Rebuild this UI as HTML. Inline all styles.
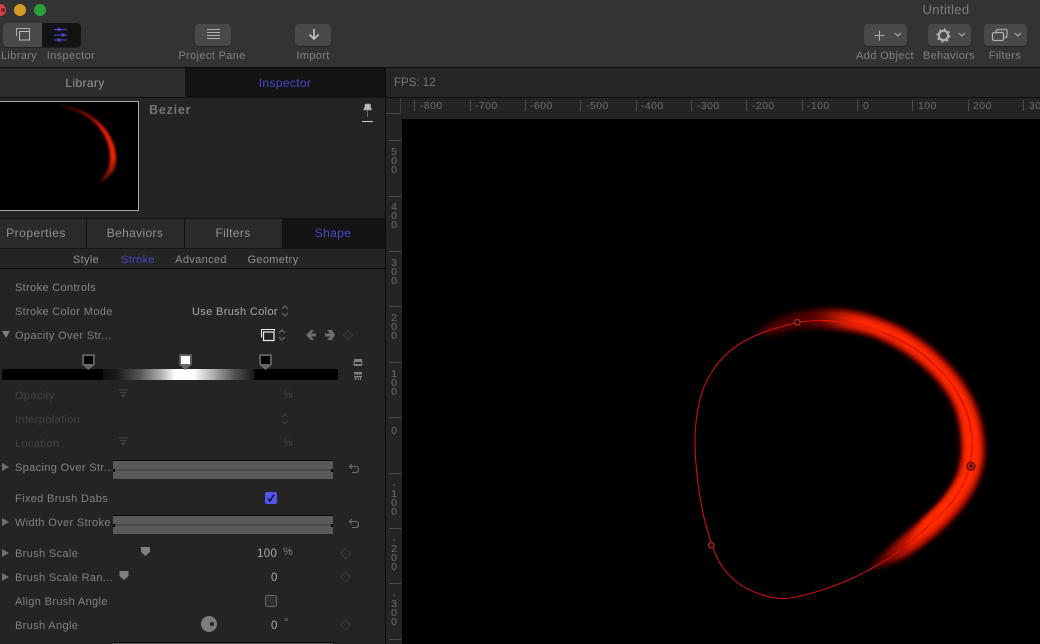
<!DOCTYPE html>
<html><head><meta charset="utf-8">
<style>
html,body{margin:0;padding:0;background:#000;}
#r{position:relative;width:1040px;height:644px;overflow:hidden;background:#242424;font-family:"Liberation Sans",sans-serif;font-size:11px;color:#8a8a8a;}
.a{position:absolute;}
.t{position:absolute;white-space:nowrap;line-height:14px;letter-spacing:.35px;}
.c{transform:translateX(-50%);}
.b{position:absolute;background:#494949;border-radius:4px;box-shadow:0 1px 0 #222;top:24px;height:22px;}
.l{color:#828282;}
.d{color:#424242;}
.v{color:#aaa;}
.rx{position:absolute;top:100px;font-size:10.5px;color:#6c6c6c;letter-spacing:.4px;line-height:12px;white-space:nowrap;}
.tk{position:absolute;top:100px;width:1px;height:11px;background:#4c4c4c;}
.ry{position:absolute;left:386px;width:16px;text-align:center;font-size:10.5px;line-height:9px;color:#6c6c6c;}
.ty{position:absolute;left:389px;width:12px;height:1px;background:#4c4c4c;}
svg{position:absolute;overflow:visible;}
</style></head><body><div id="r">

<!-- toolbar -->
<div class="a" style="left:0;top:0;width:1040px;height:67px;background:#333"></div>
<div class="a" style="left:0;top:67px;width:1040px;height:1px;background:#0c0c0c"></div>
<div class="a" style="left:-6px;top:4px;width:12px;height:12px;border-radius:50%;background:#d8404a"></div>
<div class="a" style="left:1px;top:8px;width:4px;height:4px;border-radius:50%;background:#7a2228"></div>
<div class="a" style="left:14px;top:4px;width:12px;height:12px;border-radius:50%;background:#d69a28"></div>
<div class="a" style="left:34px;top:4px;width:12px;height:12px;border-radius:50%;background:#2aa03a"></div>
<div class="t c" style="left:946px;top:3px;font-size:13px;color:#7e7e7e">Untitled</div>

<div class="b" style="left:3px;width:39px;top:23px;height:24px;border-radius:4px 0 0 4px"></div>
<div class="b" style="left:42px;width:39px;top:23px;height:24px;background:#131313;border-radius:0 4px 4px 0"></div>
<svg style="left:0;top:0" width="100" height="50" fill="none" stroke="#aaa" stroke-width="1">
<path d="M16.500 36V28.500H29.500V37.500"/><rect x="19.500" y="31.500" width="10" height="8.500" stroke="#bbb"/>
<path d="M54 29.500H67M54 35H67M54 40H67" stroke="#4c48d8" stroke-width="1"/>
<rect x="57.500" y="28" width="3" height="3" fill="#4c48d8" stroke="none"/><rect x="61.500" y="33.500" width="3" height="3" fill="#4c48d8" stroke="none"/><rect x="57.500" y="38.500" width="3" height="3" fill="#4c48d8" stroke="none"/>
</svg>
<div class="b" style="left:195px;width:36px"></div>
<svg style="left:0;top:0" width="240" height="50" fill="none" stroke="#b0b0b0"><path d="M207 29.500H220M207 32.500H220M207 35.500H220M207 38.500H220"/></svg>
<div class="b" style="left:295px;width:36px"></div>
<svg style="left:0;top:0" width="340" height="50" fill="none" stroke="#c4c4c4" stroke-width="1.600"><path d="M314 29V39M309.500 34.500L314 39L318.500 34.500"/></svg>
<div class="b" style="left:864px;width:43px"></div>
<div class="b" style="left:928px;width:43px"></div>
<div class="b" style="left:984px;width:43px"></div>
<svg style="left:0;top:0" width="1040" height="50" fill="none" stroke="#b0b0b0">
<path d="M879.500 30.500V40.500M874.500 35.500H884.500" stroke-width="1.100"/>
<path d="M895 33L898 36L901 33M959 33L962 36L965 33M1015 33L1018 36L1021 33" stroke-width="1.100"/>
<circle cx="943.500" cy="35.500" r="4.700" stroke-width="2.200"/>
<circle cx="943.500" cy="35.500" r="6.300" stroke-dasharray="2 2.950" stroke-width="1.600"/>
<path d="M996 33.500V31.500Q996 29.500 998 29.500H1006Q1007 29.500 1007 31V36Q1007 37.500 1005.500 37.500H1004" stroke="#999" stroke-width="1.500"/>
<rect x="992.500" y="32.500" width="11" height="8" rx="1.500" stroke-width="1.200"/>
</svg>
<div class="t c" style="left:19px;top:49px;color:#808080">Library</div>
<div class="t c" style="left:71px;top:49px;color:#808080">Inspector</div>
<div class="t c" style="left:212px;top:49px;color:#808080">Project Pane</div>
<div class="t c" style="left:313px;top:49px;color:#808080">Import</div>
<div class="t c" style="left:885px;top:49px;color:#808080">Add Object</div>
<div class="t c" style="left:949px;top:49px;color:#808080">Behaviors</div>
<div class="t c" style="left:1005px;top:49px;color:#808080">Filters</div>

<!-- main tabs -->
<div class="a" style="left:0;top:68px;width:185px;height:29px;background:#2d2d2d"></div>
<div class="a" style="left:185px;top:68px;width:200px;height:30px;background:#141414"></div>
<div class="a" style="left:0;top:97px;width:185px;height:1px;background:#0d0d0d"></div>
<div class="t c" style="left:85px;top:76px;font-size:12px;color:#989898">Library</div>
<div class="t c" style="left:285px;top:76px;font-size:12px;color:#4a47cc">Inspector</div>
<div class="a" style="left:385px;top:68px;width:1px;height:576px;background:#0c0c0c"></div>

<!-- thumbnail -->
<div class="a" style="left:-2px;top:101px;width:139px;height:108px;background:#000;border:1px solid #a8a8a8"></div>
<svg style="left:0;top:0" width="140" height="212">
<defs><filter id="f0" x="-30%" y="-30%" width="160%" height="160%"><feGaussianBlur stdDeviation="1"/></filter>
<linearGradient id="tg" gradientUnits="userSpaceOnUse" x1="0" y1="105" x2="0" y2="185"><stop offset="0" stop-color="#300"/><stop offset=".3" stop-color="#d81c00"/><stop offset=".65" stop-color="#f02400"/><stop offset="1" stop-color="#2a0400"/></linearGradient></defs>
<path d="M57 106C75 105 92 113 104 127C115 140 119 158 114 170C110 177 104 181 97 184C106 175 110 168 110 156C110 143 102 128 90 119C80 112 68 108 57 106Z" fill="url(#tg)" filter="url(#f0)"/>
</svg>
<div class="t" style="left:149px;top:103px;font-size:12.500px;font-weight:bold;color:#747474;letter-spacing:.8px">Bezier</div>
<svg style="left:0;top:0" width="385" height="125">
<path d="M365 104H370.500V106.500L371.500 110H363.500L365 106.500ZM367.500 110V117" fill="#bdbdbd" stroke="#999" stroke-width=".6"/><path d="M362 121.500H373" stroke="#ccc" stroke-width="1"/>
</svg>

<!-- section tabs -->
<div class="a" style="left:0;top:218px;width:385px;height:1px;background:#111"></div>
<div class="a" style="left:0;top:219px;width:282px;height:29px;background:#2a2a2a"></div>
<div class="a" style="left:282px;top:219px;width:103px;height:29px;background:#141414"></div>
<div class="a" style="left:86px;top:219px;width:1px;height:29px;background:#111"></div>
<div class="a" style="left:184px;top:219px;width:1px;height:29px;background:#111"></div>
<div class="a" style="left:0;top:248px;width:385px;height:1px;background:#161616"></div>
<div class="t c" style="left:36px;top:226px;font-size:12px;color:#929292;letter-spacing:.5px">Properties</div>
<div class="t c" style="left:135px;top:226px;font-size:12px;color:#929292">Behaviors</div>
<div class="t c" style="left:233px;top:226px;font-size:12px;color:#929292">Filters</div>
<div class="t c" style="left:333px;top:226px;font-size:12px;color:#4a47cc">Shape</div>
<div class="t c" style="left:86px;top:253px;color:#909090">Style</div>
<div class="t c" style="left:138px;top:253px;color:#4a47c4">Stroke</div>
<div class="t c" style="left:201px;top:253px;color:#909090">Advanced</div>
<div class="t c" style="left:273px;top:253px;color:#909090">Geometry</div>
<div class="a" style="left:0;top:268px;width:385px;height:1px;background:#0f0f0f"></div>

<!-- rows -->
<div class="t" style="left:15px;top:281px;color:#888">Stroke Controls</div>
<div class="t l" style="left:15px;top:305px">Stroke Color Mode</div>
<div class="t v" style="left:192px;top:305px">Use Brush Color</div>
<div class="t l" style="left:15px;top:329px">Opacity Over Str...</div>
<div class="t d" style="left:15px;top:389px">Opacity</div>
<div class="t d" style="left:15px;top:413px">Interpolation</div>
<div class="t d" style="left:15px;top:437px">Location</div>
<div class="t d" style="left:283px;top:388px">%</div>
<div class="t d" style="left:283px;top:436px">%</div>
<div class="t l" style="left:15px;top:461px">Spacing Over Str...</div>
<div class="t l" style="left:15px;top:492px">Fixed Brush Dabs</div>
<div class="t l" style="left:15px;top:516px">Width Over Stroke</div>
<div class="t l" style="left:15px;top:547px">Brush Scale</div>
<div class="t l" style="left:15px;top:571px">Brush Scale Ran...</div>
<div class="t l" style="left:15px;top:595px">Align Brush Angle</div>
<div class="t l" style="left:15px;top:619px">Brush Angle</div>
<div class="t v" style="left:257px;top:547px;font-size:11.500px">100</div>
<div class="t l" style="left:283px;top:545px">%</div>
<div class="t v" style="left:271px;top:571px;font-size:11.500px">0</div>
<div class="t v" style="left:271px;top:619px;font-size:11.500px">0</div>
<div class="t l" style="left:284px;top:616px">°</div>

<!-- gradient bar -->
<div class="a" style="left:2px;top:369px;width:336px;height:11px;border-radius:2px;background:linear-gradient(90deg,#000 0,#000 30%,#111 30%,#191919 34%,#555 41%,#aaa 47%,#fff 51.500%,#fff 57%,#bbb 62%,#555 69%,#1a1a1a 75%,#000 75.300%,#000 100%)"></div>
<svg style="left:0;top:0" width="385" height="644" fill="none">
<g stroke="#666" stroke-width="1.500" fill="#666">
<path d="M83 355H94V364.500L88.500 369L83 364.500Z"/><path d="M180 355H191V364.500L185.500 369L180 364.500Z"/><path d="M260 355H271V364.500L265.500 369L260 364.500Z"/>
</g>
<rect x="84" y="356" width="9" height="8" fill="#000"/><rect x="181" y="356" width="9" height="8" fill="#fff"/><rect x="261" y="356" width="9" height="8" fill="#000"/>
<!-- triangles -->
<path d="M2 331H10L6 338Z" fill="#808080"/>
<path d="M2 463V471L9 467Z" fill="#707070"/><path d="M2 518V526L9 522Z" fill="#707070"/><path d="M2 549V557L9 553Z" fill="#707070"/><path d="M2 573V581L9 577Z" fill="#707070"/>
<!-- steppers -->
<g stroke="#6e6e6e" stroke-width="1.100">
<path d="M282 309L285 306L288 309M282 313L285 316L288 313"/>
<path d="M279 333L282 330L285 333M279 337L282 340L285 337"/>
</g>
<path d="M282 417L285 414L288 417M282 421L285 424L288 421" stroke="#3e3e3e"/>
<!-- layers icon -->
<path d="M261.500 337.500V329.500H274.500V331" stroke="#eee" stroke-width="1"/><rect x="263.500" y="332" width="10.500" height="8.500" stroke="#eee" stroke-width="1.200"/>
<!-- nav arrows -->
<path d="M311 330L306 335L311 340H314L311 336.500H316V333.500H311L314 330Z" fill="#6e6e6e"/>
<path d="M327 330L332 330L335 335L332 340H327L330 336.500H325V333.500H330Z" fill="#6e6e6e"/>
<path d="M348 330.500L352.500 335L348 339.500L343.500 335Z" stroke="#3a3a3a"/>
<!-- stack icons -->
<path d="M354 359.500H362M354 365.500H362" stroke="#808080" stroke-width="1"/><rect x="354" y="361.500" width="8" height="3" stroke="#808080" stroke-width="1"/><rect x="354" y="360" width="8" height="2" fill="#808080"/>
<rect x="354" y="372" width="8" height="2.500" fill="#808080"/><path d="M354 376.500H362M355.500 377V380M358 377V380M360.500 377V380" stroke="#808080" stroke-width="1.200"/>
<!-- dim slider glyphs -->
<path d="M119 390H128M120 392.500H127M122 395H125L123.500 397Z" stroke="#444"/>
<path d="M119 438H128M120 440.500H127M122 443H125L123.500 445Z" stroke="#444"/>
<!-- curve bars -->
<rect x="113" y="461" width="220" height="18" fill="#5a5a5a"/><path d="M113 460.500H333" stroke="#0a0a0a"/><path d="M113 470H333" stroke="#464646" stroke-width="1.600"/>
<rect x="113" y="469" width="2" height="3" fill="#000"/><rect x="331" y="469" width="2" height="3" fill="#000"/>
<rect x="113" y="516" width="220" height="18" fill="#5a5a5a"/><path d="M113 515.500H333" stroke="#0a0a0a"/><path d="M113 525H333" stroke="#464646" stroke-width="1.600"/>
<rect x="113" y="524" width="2" height="3" fill="#000"/><rect x="331" y="524" width="2" height="3" fill="#000"/>
<path d="M113 642.500H333" stroke="#0a0a0a"/><rect x="113" y="643" width="220" height="1" fill="#5a5a5a"/>
<!-- reset -->
<path d="M352 464L349.500 466.500L352 469M350 466.500H355.500Q358.500 466.500 358.500 469.500Q358.500 472.500 355.500 472.500H352" stroke="#6e6e6e" stroke-width="1.100"/>
<path d="M352 519L349.500 521.500L352 524M350 521.500H355.500Q358.500 521.500 358.500 524.500Q358.500 527.500 355.500 527.500H352" stroke="#6e6e6e" stroke-width="1.100"/>
<!-- diamonds -->
<path d="M345.500 548.500L350.500 553.500L345.500 558.500L340.500 553.500Z" stroke="#3a3a3a"/>
<path d="M345.500 572L350.500 577L345.500 582L340.500 577Z" stroke="#3a3a3a"/>
<path d="M345.500 620L350.500 625L345.500 630L340.500 625Z" stroke="#3a3a3a"/>
<!-- slider thumbs -->
<path d="M141 547H150V552L145.500 556L141 552Z" fill="#808080"/>
<path d="M119.500 571H128.500V576L124 580L119.500 576Z" fill="#808080"/>
<!-- check -->
<rect x="265" y="492" width="12" height="12" rx="2" fill="#5553ee"/>
<path d="M268 498.500L270 501L274 494.500" stroke="#0c0c20" stroke-width="1.400"/>
<rect x="265.500" y="595.500" width="11" height="11" rx="2" fill="#2f2f2f" stroke="#6a6a6a"/>
<!-- dial -->
<circle cx="209" cy="624" r="8" fill="#7c7c7c"/><circle cx="212" cy="624" r="2" fill="#222"/>
</svg>

<!-- viewer header -->
<div class="a" style="left:386px;top:68px;width:654px;height:29px;background:#262626"></div>
<div class="a" style="left:386px;top:97px;width:654px;height:1px;background:#0c0c0c"></div>
<div class="t" style="left:394px;top:76px;font-size:11.500px;color:#777;letter-spacing:0">FPS: 12</div>
<div class="a" style="left:386px;top:98px;width:654px;height:546px;background:#242424"></div>
<div class="a" style="left:402px;top:119px;width:638px;height:525px;background:#000"></div>
<div class="a" style="left:386px;top:113px;width:15px;height:1px;background:#4c4c4c"></div>
<div class="a" style="left:400px;top:98px;width:1px;height:16px;background:#3c3c3c"></div>

<div class="tk" style="left:414px"></div><div class="rx" style="left:420px">-800</div>
<div class="tk" style="left:470px"></div><div class="rx" style="left:475px">-700</div>
<div class="tk" style="left:525px"></div><div class="rx" style="left:530px">-600</div>
<div class="tk" style="left:580px"></div><div class="rx" style="left:586px">-500</div>
<div class="tk" style="left:636px"></div><div class="rx" style="left:641px">-400</div>
<div class="tk" style="left:691px"></div><div class="rx" style="left:697px">-300</div>
<div class="tk" style="left:746px"></div><div class="rx" style="left:752px">-200</div>
<div class="tk" style="left:802px"></div><div class="rx" style="left:807px">-100</div>
<div class="tk" style="left:857px"></div><div class="rx" style="left:863px">0</div>
<div class="tk" style="left:912px"></div><div class="rx" style="left:918px">100</div>
<div class="tk" style="left:968px"></div><div class="rx" style="left:973px">200</div>
<div class="tk" style="left:1023px"></div><div class="rx" style="left:1029px">300</div>

<div class="ty" style="top:140px"></div><div class="ry" style="top:148px">5<br>0<br>0</div>
<div class="ty" style="top:196px"></div><div class="ry" style="top:203px">4<br>0<br>0</div>
<div class="ty" style="top:251px"></div><div class="ry" style="top:259px">3<br>0<br>0</div>
<div class="ty" style="top:306px"></div><div class="ry" style="top:314px">2<br>0<br>0</div>
<div class="ty" style="top:362px"></div><div class="ry" style="top:370px">1<br>0<br>0</div>
<div class="ty" style="top:417px"></div><div class="ry" style="top:427px">0</div>
<div class="ty" style="top:473px"></div><div class="ry" style="top:481px">-<br>1<br>0<br>0</div>
<div class="ty" style="top:528px"></div><div class="ry" style="top:536px">-<br>2<br>0<br>0</div>
<div class="ty" style="top:583px"></div><div class="ry" style="top:591px">-<br>3<br>0<br>0</div>
<div class="ty" style="top:639px"></div>

<!-- canvas art -->
<svg style="left:0;top:0" width="1040" height="644" fill="none">
<defs>
<filter id="g1" x="-20%" y="-20%" width="140%" height="140%"><feGaussianBlur stdDeviation="3"/></filter>
<filter id="g2" x="-20%" y="-20%" width="140%" height="140%"><feGaussianBlur stdDeviation="2.200"/></filter>
<filter id="g3" x="-30%" y="-30%" width="160%" height="160%"><feGaussianBlur stdDeviation="14"/></filter>
<mask id="m1" maskUnits="userSpaceOnUse" x="700" y="260" width="340" height="360"><path d="M815 270H1030V610H900L880 440Z" fill="#fff" filter="url(#g3)"/></mask>
<path id="cres" d="M757 332Q780 315 800 311.500Q820 308 843.500 310.500Q867 313 890 323Q913 333 933 350Q953 367 965 386Q977 405 981 423.500Q985 442 983.500 458.500Q982 475 972.500 491.500Q963 508 948 523Q933 538 913 551.500Q893 565 867 570Q877 558 895 543Q913 528 928 515Q943 502 951.500 487Q960 472 961.500 457Q963 442 960 425Q957 408 947 393Q937 378 922 365Q907 352 887 342Q867 332 845 330Q823 328 810 328Q797 328 782 332.500Q767 337 757 332Z"/>
</defs>
<use href="#cres" fill="#4c0600" filter="url(#g1)"/>
<g mask="url(#m1)">
<use href="#cres" fill="#d01600" filter="url(#g1)"/>
<path d="M800 320Q820 313 843 315Q867 318 889 327Q911 337 930 353Q949 370 961 388Q973 407 977 425Q981 442 979.500 457Q978 473 968 489Q959 505 944 520Q929 535 905 549Q916 526 931 512Q946 498 954 485Q963 472 964 457Q965 442 962 424Q960 406 950 391Q940 376 924 362Q909 349 888 338Q867 328 845 326Q823 324 800 320Z" fill="#ff2c00" filter="url(#g2)"/>
</g>
<path d="M797.300 322.300Q823 319 845 322Q867 325 890 335Q913 345 930 360Q947 375 957 391.500Q967 408 970 423Q973 438 972 452Q971 466 964 482Q957 498 942 513Q927 528 910 542.500Q893 557 870 569.500Q847 582 822 590Q797 598 785 598.500Q773 599 758 593.500Q743 588 733 579Q723 570 717 557.500Q711 545 705.500 523.500Q700 502 697.500 480Q695 458 695 440Q695 422 699 403.500Q703 385 713 370Q723 355 738 345Q753 335 775 328.500Q797.300 322.300 797.300 322.300" stroke="#c81010" stroke-width="1.100"/>
<path d="M823 320.500Q845 322 867 326Q890 335 913 348Q930 360 947 378Q957 391.500 965 410Q970 423 972 440Q972 452 968 474Q964 482 953 502Q942 513 928 527" stroke="#ee1c00" stroke-width="1.100"/>
<circle cx="797.300" cy="322.300" r="2.800" stroke="#a03020" stroke-width="1.300" fill="#300"/>
<circle cx="711.300" cy="545.300" r="2.800" stroke="#a03020" stroke-width="1.300" fill="#300"/>
<circle cx="971" cy="466.300" r="4" stroke="#5a0c00" stroke-width="1.300" fill="#d02000"/>
<circle cx="971" cy="466.300" r="1.800" fill="#4a0800"/>
</svg>

</div></body></html>
